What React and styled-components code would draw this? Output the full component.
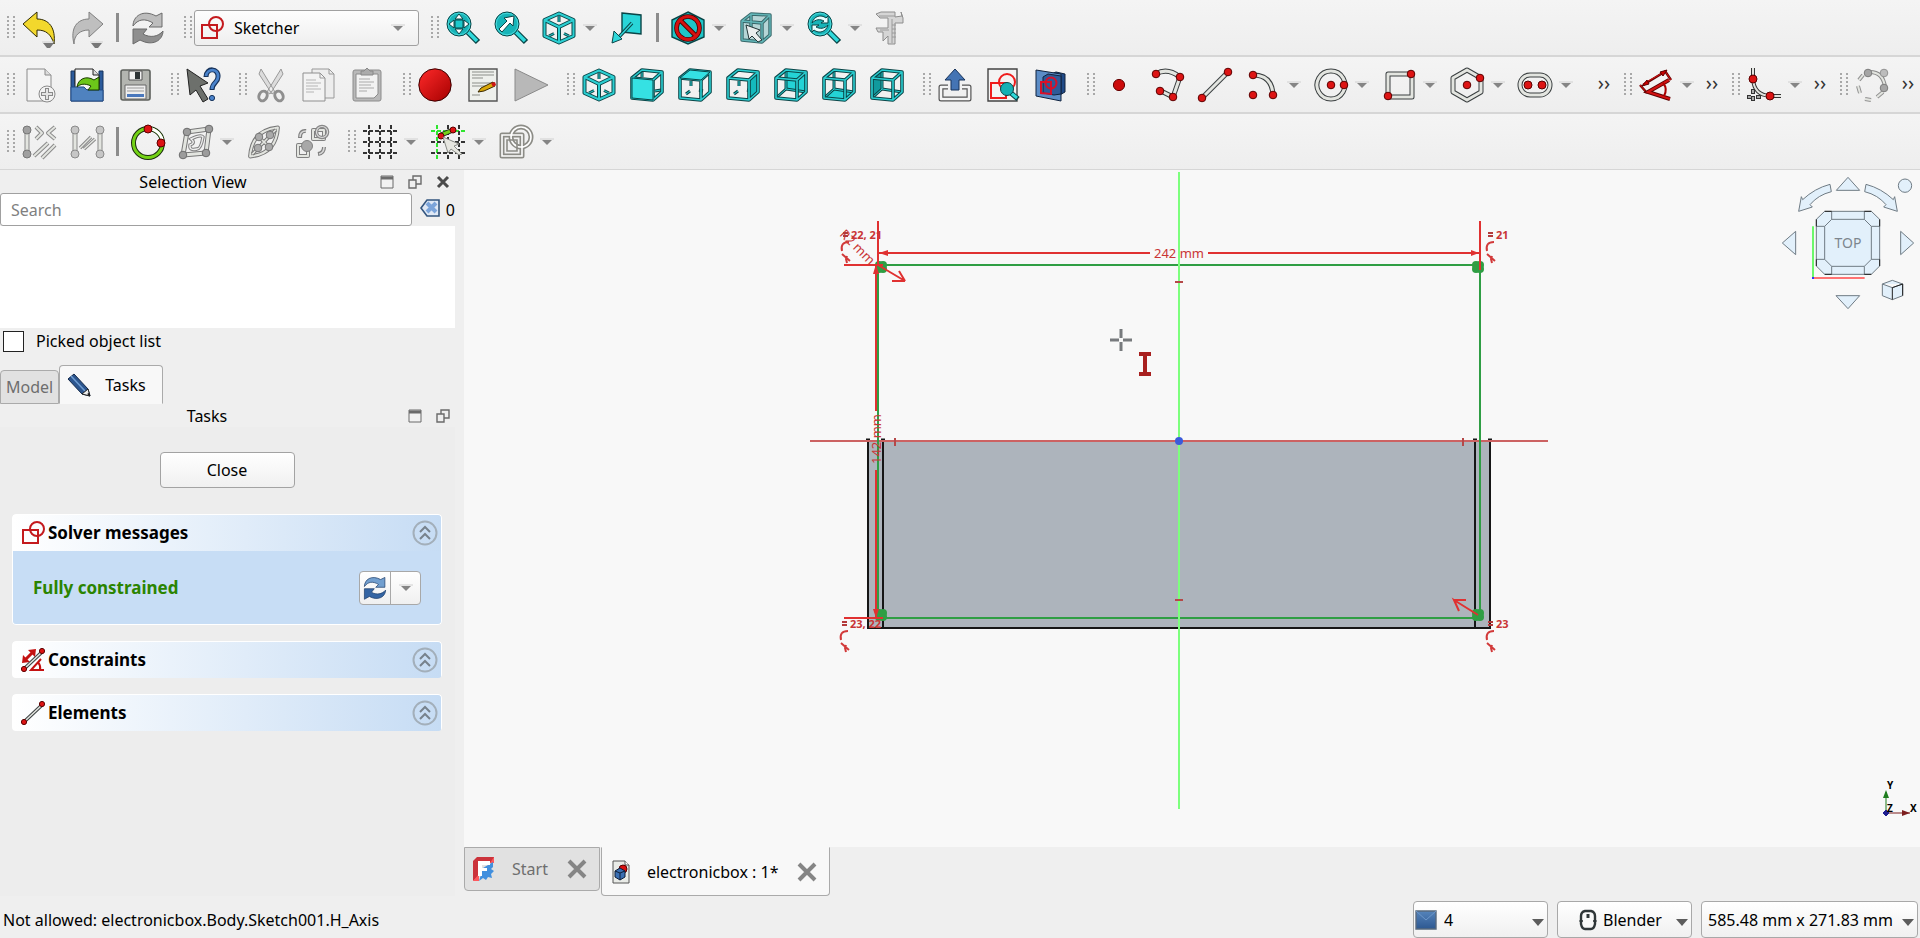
import styled, { createGlobalStyle } from 'styled-components'
import { useState } from 'react'

const TEAL = '#2fd9db'
const TEAL_DARK = '#0a4547'
const GREY = '#8a8a8a'

export default function App() {
  const [picked, setPicked] = useState(false)
  const [search, setSearch] = useState('')

  return (
    <>
      <GlobalStyle />
      <Window>
        <Toolbars />
        <Main>
          <Sidebar>
            <DockTitle>
              <h2>Selection View</h2>
              <TitleButton aria-label="Minimize"><DockMin /></TitleButton>
              <TitleButton aria-label="Float"><DockFloat /></TitleButton>
              <TitleButton aria-label="Close dock"><DockClose /></TitleButton>
            </DockTitle>
            <SearchRow>
              <SearchInput aria-label="Search" placeholder="Search" value={search} onChange={(e) => setSearch(e.target.value)} />
              <ClearButton aria-label="Clear selection"><ClearIcon /></ClearButton>
              <span>0</span>
            </SearchRow>
            <SelectionList />
            <PickedLabel>
              <Checkbox type="checkbox" checked={picked} onChange={(e) => setPicked(e.target.checked)} />
              Picked object list
            </PickedLabel>
            <PanelTabs>
              <PanelTab>Model</PanelTab>
              <PanelTab $active><PencilIcon />Tasks</PanelTab>
            </PanelTabs>
            <DockTitle>
              <h2>Tasks</h2>
              <TitleButton aria-label="Minimize"><DockMin /></TitleButton>
              <TitleButton aria-label="Float"><DockFloat /></TitleButton>
            </DockTitle>
            <TaskPanel>
              <CloseButton>Close</CloseButton>
              <TaskBox>
                <TaskHeader><SketchLogo size={24} /><h3>Solver messages</h3><Collapse /></TaskHeader>
                <TaskBody>
                  <strong>Fully constrained</strong>
                  <SplitButton>
                    <button aria-label="Update"><Recompute size={24} light="#729fcf" dark="#3465a4" line="#1c3c68" /></button>
                    <button aria-label="Update options"><Arrow /></button>
                  </SplitButton>
                </TaskBody>
              </TaskBox>
              <TaskBox>
                <TaskHeader><ConstraintsIcon /><h3>Constraints</h3><Collapse /></TaskHeader>
              </TaskBox>
              <TaskBox>
                <TaskHeader><ElementsIcon /><h3>Elements</h3><Collapse /></TaskHeader>
              </TaskBox>
            </TaskPanel>
          </Sidebar>
          <Document>
            <Viewport>
              <Sketch />
              <CubeCorner><NaviCube /></CubeCorner>
              <AxisCorner><AxisCross /></AxisCorner>
            </Viewport>
            <DocTabs>
              <DocTab>
                <FreecadIcon />
                <span>Start</span>
                <TabClose aria-label="Close Start"><CrossIcon /></TabClose>
              </DocTab>
              <DocTab $active>
                <DocIcon />
                <span>electronicbox : 1*</span>
                <TabClose aria-label="Close electronicbox"><CrossIcon /></TabClose>
              </DocTab>
            </DocTabs>
          </Document>
        </Main>
        <StatusBar>
          <p>Not allowed: electronicbox.Body.Sketch001.H_Axis</p>
          <StatusCombo $width={135} $pad={30}>
            <ComboIcon $left={2}><ReportIcon /></ComboIcon>
            <select aria-label="Notifications"><option>4</option></select>
            <Caret />
          </StatusCombo>
          <StatusCombo $width={135} $pad={45}>
            <ComboIcon $left={22}><MouseIcon /></ComboIcon>
            <select aria-label="Navigation style"><option>Blender</option></select>
            <Caret />
          </StatusCombo>
          <StatusCombo $width={217} $pad={6}>
            <select aria-label="Dimensions"><option>585.48 mm x 271.83 mm</option></select>
            <Caret />
          </StatusCombo>
        </StatusBar>
      </Window>
    </>
  )
}

function Toolbars() {
  return (
    <header>
      <ToolRow>
        <Group>
          <Handle />
          <Tool name="Undo"><Undo /></Tool>
          <Tool name="Redo"><Redo /></Tool>
          <Separator />
          <Tool name="Refresh"><Recompute size={34} light="#bdbdbd" dark="#8f8f8f" line="#6a6a6a" /></Tool>
        </Group>
        <Group>
          <Handle />
          <Workbench>
            <ComboIcon $left={6}><SketchLogo size={24} /></ComboIcon>
            <select aria-label="Workbench"><option>Sketcher</option></select>
            <ComboArrow><Arrow /></ComboArrow>
          </Workbench>
        </Group>
        <Group>
          <Handle />
          <Tool name="Fit all"><Zoom kind="all" /></Tool>
          <Tool name="Fit selection"><Zoom kind="selection" /></Tool>
          <Tool name="Isometric" menu><CubeIso /></Tool>
          <Tool name="Align to selection"><AlignView /></Tool>
          <Separator />
          <Tool name="Draw style" menu><DrawStyle /></Tool>
          <Tool name="Box selection" menu><BoxSelect /></Tool>
          <Tool name="Sync view" menu><Zoom kind="sync" /></Tool>
          <Tool name="Measure"><Caliper /></Tool>
        </Group>
      </ToolRow>
      <ToolRow>
        <Group>
          <Handle />
          <Tool name="New"><NewFile /></Tool>
          <Tool name="Open"><OpenFile /></Tool>
          <Tool name="Save"><SaveFile /></Tool>
        </Group>
        <Group>
          <Handle />
          <Tool name="What's this"><WhatsThis /></Tool>
        </Group>
        <Group>
          <Handle />
          <Tool name="Cut"><Cut /></Tool>
          <Tool name="Copy"><Copy /></Tool>
          <Tool name="Paste"><Paste /></Tool>
        </Group>
        <Group>
          <Handle />
          <Tool name="Record macro"><Record /></Tool>
          <Tool name="Macros"><Macros /></Tool>
          <Tool name="Run macro"><Play /></Tool>
        </Group>
        <Group>
          <Handle />
          <Tool name="Isometric view"><CubeIso /></Tool>
          {['front', 'top', 'right', 'rear', 'bottom', 'left'].map((face) => (
            <Tool key={face} name={face}><CubeView face={face} /></Tool>
          ))}
        </Group>
        <Group>
          <Handle />
          <Tool name="Leave sketch"><LeaveSketch /></Tool>
          <Tool name="View sketch"><ViewSketch /></Tool>
          <Tool name="View section"><ViewSection /></Tool>
        </Group>
        <Group $grow>
          <Handle />
          <Tool name="Point"><Svg><circle cx="17" cy="17" r="5.6" fill="#cc0c0c" stroke="#600" /></Svg></Tool>
          <Tool name="Polyline">
            <Svg>
              <Tube d="M6 6Q17-1 30 9L23 29L9 22" />
              <Dot x={6} y={6} /><Dot x={30} y={9} /><Dot x={23} y={29} /><Dot x={10} y={23} />
            </Svg>
          </Tool>
          <Tool name="Line"><Svg><Tube d="M4 30L30 4" /><Dot x={4} y={30} /><Dot x={30} y={4} /></Svg></Tool>
          <Tool name="Arc" menu>
            <Svg><Tube d="M7 7Q26 7 27 27" /><Dot x={7} y={7} /><Dot x={27} y={27} /><Dot x={7} y={27} /></Svg>
          </Tool>
          <Tool name="Circle" menu>
            <Svg><Tube d="M17 3A14 14 0 1 1 16.9 3Z" /><Dot x={17} y={17} /><Dot x={30} y={17} /></Svg>
          </Tool>
          <Tool name="Rectangle" menu>
            <Svg><Tube d="M6 6H30V29H6Z" /><Dot x={29} y={6} /><Dot x={6} y={28} /></Svg>
          </Tool>
          <Tool name="Polygon" menu>
            <Svg><Tube d="M17 2L31 10V24L17 32L3 24V10Z" /><Dot x={17} y={17} /><Dot x={30} y={10} /></Svg>
          </Tool>
          <Tool name="Slot" menu>
            <Svg><Tube d="M12 7H22A10 10 0 0 1 22 27H12A10 10 0 0 1 12 7Z" /><Dot x={10} y={17} r={4} /><Dot x={24} y={17} r={4} /></Svg>
          </Tool>
          <Extender aria-label="More geometries">››</Extender>
        </Group>
        <Group>
          <Handle />
          <Tool name="Dimension" menu><Dimension /></Tool>
          <Extender aria-label="More constraints">››</Extender>
        </Group>
        <Group>
          <Handle />
          <Tool name="Fillet" menu><Fillet /></Tool>
          <Extender aria-label="More tools">››</Extender>
        </Group>
        <Group>
          <Handle />
          <Tool name="B-spline"><Bspline /></Tool>
          <Extender aria-label="More b-spline tools">››</Extender>
        </Group>
      </ToolRow>
      <ToolRow>
        <Group>
          <Handle />
          <Tool name="Select constraints"><SelectConstraints /></Tool>
          <Tool name="Select elements"><SelectElements /></Tool>
          <Separator />
          <Tool name="Internal geometry">
            <Svg>
              <circle cx="17" cy="18" r="14.5" fill="none" stroke="#1b2b10" strokeWidth="5" />
              <circle cx="17" cy="18" r="14.5" fill="none" stroke="#73d216" strokeWidth="3" />
              <path d="M17 3.500A14.500 14.500 0 0 1 31.500 18" fill="none" stroke="#fff" strokeWidth="3" />
              <Dot x={17} y={4} r={4} /><Dot x={30} y={18} r={4} />
            </Svg>
          </Tool>
          <Tool name="Symmetry" menu><Symmetry /></Tool>
          <Tool name="Ellipse geometry"><EllipseGeo /></Tool>
          <Tool name="Virtual space"><VirtualSpace /></Tool>
        </Group>
        <Group>
          <Handle />
          <Tool name="Grid" menu><Svg><GridLines /></Svg></Tool>
          <Tool name="Snap" menu>
            <Svg>
              <GridLines snap />
              <path d="M10 10L22 5" stroke="#222" strokeWidth="5" />
              <path d="M10 10L22 5" stroke="#73d216" strokeWidth="3" />
              <Dot x={10} y={11} r={3} /><Dot x={22} y={5} r={3} />
              <path d="M12 12L28 19L23 21L31 29L28 30L20 24L17 28Z" fill="#e6e6e0" stroke="#888a85" />
            </Svg>
          </Tool>
          <Tool name="Rendering order" menu>
            <Svg>
              <path d="M3 10H23V31H3Z" fill="none" stroke="#8c8c86" strokeWidth="5" strokeLinejoin="round" />
              <circle cx="22" cy="12" r="10" fill="none" stroke="#8c8c86" strokeWidth="5" />
              <path d="M3 10H23V31H3Z" fill="none" stroke="#fff" strokeWidth="1.600" />
              <circle cx="22" cy="12" r="10" fill="none" stroke="#fff" strokeWidth="1.600" />
              <path d="M8 15H18V26H8Z" fill="none" stroke="#8c8c86" strokeWidth="1.600" />
            </Svg>
          </Tool>
        </Group>
      </ToolRow>
    </header>
  )
}

function Tool({ name, menu, children }) {
  return (
    <>
      <ToolButton aria-label={name}>{children}</ToolButton>
      {menu && <MenuButton aria-label={name + ' menu'}><Arrow /></MenuButton>}
    </>
  )
}

function Svg({ size = 34, children }) {
  return <svg width={size} height={size} viewBox="0 0 34 34">{children}</svg>
}

// A hollow line, the way sketch geometry is drawn on the buttons
function Tube({ d, line = '#3a3f40', fill = '#e3e5e0', w = 5 }) {
  return (
    <>
      <path d={d} fill="none" stroke={line} strokeWidth={w} strokeLinejoin="round" />
      <path d={d} fill="none" stroke={fill} strokeWidth={w - 2} strokeLinejoin="round" />
    </>
  )
}

function Dot({ x, y, r = 3.8, fill = '#dd1414', line = '#5c0000' }) {
  return <circle cx={x} cy={y} r={r} fill={fill} stroke={line} />
}

function Arrow() {
  return (
    <svg width="14" height="8" viewBox="0 0 14 8">
      <path d="M0 1H14" stroke="#d0d0d0" />
      <path d="M2 2H12L7 7Z" fill="#858585" />
    </svg>
  )
}

function Undo() {
  return (
    <Svg>
      <path d="M1 13L15 1V8C27 8 34 17 32 33C29 23 24 19 15 19V26Z" fill="#f3d82c" stroke="#302b00" strokeLinejoin="round" />
      <path d="M20 31H32" stroke="#d0d0d0" />
      <path d="M21 32H32L28 37H25Z" fill="#777" />
    </Svg>
  )
}

function Redo() {
  return (
    <Svg>
      <path d="M33 13L19 1V8C7 8 0 17 4 33C4 24 10 19 19 19V26Z" fill="#bfbfbf" stroke="#808080" strokeLinejoin="round" />
      <path d="M20 31H33" stroke="#d0d0d0" />
      <path d="M21 32H32L28 37H25Z" fill="#777" />
    </Svg>
  )
}

function Recompute({ size, light, dark, line }) {
  return (
    <Svg size={size}>
      <path d="M2 15C2 5 12-2 25 5L31 2V16H18L22 12C14 7 7 8 2 15Z" fill={light} stroke={line} strokeLinejoin="round" />
      <path d="M32 20C32 29 22 36 9 29L2 33V18H16L12 23C19 27 27 26 32 20Z" fill={dark} stroke={line} strokeLinejoin="round" />
    </Svg>
  )
}

function SketchLogo({ size }) {
  return (
    <svg width={size} height={size} viewBox="0 0 24 24" fill="none" stroke="#c41a1e" strokeWidth="2">
      <rect x="2" y="9" width="15" height="13" />
      <circle cx="16" cy="8" r="7" />
    </svg>
  )
}

function Zoom({ kind }) {
  return (
    <Svg>
      <path d="M22 21L32 31" stroke={TEAL_DARK} strokeWidth="6" />
      <path d="M22 21L31 30" stroke={TEAL} strokeWidth="3.600" />
      <circle cx="13" cy="13" r="12" fill="#17b4b8" stroke={TEAL_DARK} />
      <circle cx="13" cy="13" r="10.800" fill="none" stroke="#49d8da" />
      {kind === 'all' && (
        <path d="M13 3L17 8H9ZM13 23L17 18H9ZM3 13L8 9V17ZM23 13L18 9V17Z" fill="#fff" stroke={TEAL_DARK} />
      )}
      {kind === 'all' && <path d="M9 9H17V17H9Z" fill="#1cc9cc" stroke={TEAL_DARK} />}
      {kind === 'selection' && (
        <path d="M5 18L13 10L10 7L20 5L19 15L16 12L8 21Z" fill="#fff" stroke={TEAL_DARK} />
      )}
      {kind === 'sync' && (
        <path d="M5 12C7 5 14 3 19 7L21 5V12H14L17 10C13 8 9 8 5 12ZM21 14C19 21 12 23 7 19L5 21V14H12L9 16C13 18 17 18 21 14Z" fill="#e8ffff" stroke={TEAL_DARK} />
      )}
    </Svg>
  )
}

function CubeIso() {
  return (
    <Svg>
      <Tube d="M17 2.500L31.500 9V25L17 31.500L2.500 25V9ZM2.500 9L17 16L31.500 9M17 16V31.500" line={TEAL_DARK} fill="#2bcfd2" w={4} />
      <Tube d="M17 5V11M7 25L12 22.500M27 25L22 22.500" line={TEAL_DARK} fill="#2bcfd2" w={3} />
    </Svg>
  )
}

const FACES = {
  front: '2,10 23,12 23,32 2,30',
  top: '2,10 12,2 32,4 23,12',
  right: '23,12 32,4 32,24 23,32',
  rear: '12,2 32,4 32,24 12,21',
  bottom: '2,30 12,21 32,24 23,32',
  left: '2,10 12,2 12,21 2,30',
}

function CubeView({ face }) {
  const open = face === 'rear' || face === 'bottom' || face === 'left'
  return (
    <Svg>
      {open && <polygon points={FACES[face]} fill={face === 'left' ? '#119a9e' : '#24d3d6'} />}
      {open && <Tube d="M12 2V21L2 30M12 21L32 24" line={TEAL_DARK} fill="#2bcfd2" w={3} />}
      {!open && face !== 'front' && <Tube d="M13 13V18M8 26L12 23M21 22L25 23" line={TEAL_DARK} fill="#2bcfd2" w={3} />}
      {face === 'front' && <Tube d="M12 3V9M25 23L31 22" line={TEAL_DARK} fill="#2bcfd2" w={3} />}
      {!open && <polygon points={FACES[face]} fill={face === 'right' ? '#14babd' : '#35e1e3'} />}
      <Tube d="M2 10L12 2L32 4V24L23 32L2 30ZM2 10L23 12L32 4M23 12V32" line={TEAL_DARK} fill="#2bcfd2" w={3.600} />
      {(face === 'front' || face === 'top') && <polygon points={FACES[face]} fill="#35e1e3" stroke={TEAL_DARK} />}
    </Svg>
  )
}

function AlignView() {
  return (
    <Svg>
      <path d="M12 2L31 4V23L12 21Z" fill="#29d5d8" stroke={TEAL_DARK} strokeWidth="1.400" />
      <Tube d="M22 12L9 26" line={TEAL_DARK} fill={TEAL} w={3.400} />
      <path d="M2 32L4 20L12 28Z" fill={TEAL} stroke={TEAL_DARK} />
    </Svg>
  )
}

function DrawStyle() {
  return (
    <Svg>
      <path d="M17 1L33 9V26L17 33L1 26V9Z" fill="#1fc5c8" stroke={TEAL_DARK} strokeWidth="1.400" />
      <circle cx="17" cy="17" r="11.500" fill="none" stroke="#400" strokeWidth="4.600" />
      <path d="M9 9L25 25" stroke="#400" strokeWidth="4.600" />
      <circle cx="17" cy="17" r="11.500" fill="none" stroke="#d41111" strokeWidth="3" />
      <path d="M9 9L25 25" stroke="#d41111" strokeWidth="3" />
    </Svg>
  )
}

function BoxSelect() {
  return (
    <Svg>
      <path d="M3 10L12 3L31 4V24L23 31L3 29Z" fill="#b5d5d6" />
      <Tube d="M3 10L12 3L31 4V24L23 31L3 29ZM3 10L23 12L31 4M23 12V31M12 3V20" line="#38686a" fill="#62b6b8" w={3.400} />
      <path d="M7 14L21 19L17 22L23 29L19 31L13 25L10 28Z" fill="#e9eeee" stroke="#223536" />
    </Svg>
  )
}

function Caliper() {
  return (
    <Svg>
      <path d="M1 3L6 1H20V6L27 5L26 1L28 7V12H20V33H13V25L8 30V21H3L1 17H13V7H5Z" fill="#d5d5d5" stroke="#8d8d8d" strokeLinejoin="round" />
      <path d="M17 8V32M17 14H21M17 18H21M17 22H21M17 26H21M4 5H20M5 19H14" stroke="#9a9a9a" />
    </Svg>
  )
}

function NewFile() {
  return (
    <Svg>
      <path d="M5 1H23L29 7V33H5Z" fill="#f4f4f4" stroke={GREY} />
      <path d="M23 1V7H29" fill="#ddd" stroke={GREY} />
      <circle cx="25" cy="26" r="8" fill="#f2f2f2" stroke={GREY} />
      <path d="M25 20V32M19 26H31" stroke={GREY} strokeWidth="4" />
      <path d="M25 21V31M20 26H30" stroke="#e3e3e3" strokeWidth="2" />
    </Svg>
  )
}

function OpenFile() {
  return (
    <Svg>
      <path d="M1 3H5V16H29V3H33V33H1Z" fill="#2b5a9b" stroke="#16325a" />
      <path d="M5 1H23L29 7V22H5Z" fill="#f6f6f6" stroke="#222" />
      <path d="M23 1V7H29" fill="#ddd" stroke="#222" />
      <path d="M1 19H14L17 22H33V33H1Z" fill="#4f82bf" stroke="#204a87" />
      <path d="M7 19C8 11 16 7 24 12L29 9V22H18L21 18C15 15 10 16 7 19Z" fill="#6cc61a" stroke="#1b3b00" />
    </Svg>
  )
}

function SaveFile() {
  return (
    <Svg>
      <rect x="3" y="2" width="29" height="30" rx="2" fill="#b3b5b0" stroke="#5d605c" strokeWidth="1.600" />
      <path d="M11 3H24V12H11Z" fill="#f2f2f2" stroke="#555" />
      <path d="M17 4H22V11H17Z" fill="#2e3436" />
      <path d="M7 17H28V31H7Z" fill="#eee" stroke="#666" />
      <path d="M9 20H26M9 23H26" stroke="#999" />
      <path d="M9 26H26V29H9Z" fill="#4a78bd" />
    </Svg>
  )
}

function WhatsThis() {
  return (
    <Svg>
      <path d="M1 1L22 15L14 18L22 31L17 34L10 22L4 27Z" fill="#6d706c" stroke="#222" strokeLinejoin="round" />
      <path d="M20 9C20 -1 33 0 32 9C32 15 26 14 26 22" fill="none" stroke="#16325a" strokeWidth="5" />
      <path d="M20 8C21 0 33 0 32 9C32 15 26 14 26 21" fill="none" stroke="#4a83cb" strokeWidth="2.800" />
      <circle cx="26" cy="30" r="2.600" fill="#4a83cb" stroke="#16325a" />
    </Svg>
  )
}

function Cut() {
  return (
    <Svg>
      <path d="M7 1L21 24L18 26L5 6ZM27 1L13 24L16 26L29 6Z" fill="#dcdcdc" stroke="#999" />
      <ellipse cx="9" cy="28" rx="4" ry="5" fill="none" stroke="#8f8f8f" strokeWidth="3" transform="rotate(25 9 28)" />
      <ellipse cx="25" cy="28" rx="4" ry="5" fill="none" stroke="#8f8f8f" strokeWidth="3" transform="rotate(-25 25 28)" />
    </Svg>
  )
}

function Copy() {
  return (
    <Svg>
      <path d="M10 1H27L32 6V30H10Z" fill="#ededed" stroke="#999" />
      <path d="M27 1V6H32" fill="none" stroke="#999" />
      <path d="M1 5H18L23 10V33H1Z" fill="#f3f3f3" stroke="#8f8f8f" />
      <path d="M18 5V10H23" fill="none" stroke="#999" />
      <path d="M4 12H14M4 15H19M4 18H16M4 21H19M4 24H12" stroke="#b5b5b5" />
    </Svg>
  )
}

function Paste() {
  return (
    <Svg>
      <rect x="3" y="2" width="28" height="31" rx="2" fill="#b9b9b9" stroke="#8c8c8c" />
      <path d="M6 6H28V26L24 30H6Z" fill="#f2f2f2" stroke="#8c8c8c" />
      <path d="M11 7V3H14L17 0L20 3H23V7Z" fill="#ababab" stroke="#888" />
      <path d="M9 11H20M9 14H24M9 17H21M9 20H24M9 23H17" stroke="#aaa" />
    </Svg>
  )
}

function Record() {
  return (
    <Svg>
      <defs>
        <linearGradient id="record" x2="1" y2="1"><stop stopColor="#ff2a2a" /><stop offset="1" stopColor="#a50000" /></linearGradient>
      </defs>
      <circle cx="17" cy="17" r="16.200" fill="url(#record)" stroke="#3a0000" />
    </Svg>
  )
}

function Macros() {
  return (
    <Svg>
      <path d="M3 1H31V33H3Z" fill="#eef0ec" stroke="#555" strokeWidth="1.400" />
      <path d="M6 4H28M6 7H28M6 10H17M6 15H28M6 18H28M6 27H14" stroke="#8b8e89" />
      <path d="M12 24L15 20L27 14L29 18L18 23Z" fill="#d9a708" stroke="#3b2a00" />
      <path d="M25 15L29 14L30 17L27 19Z" fill="#cc1414" />
    </Svg>
  )
}

function Play() {
  return <Svg><path d="M1 1L34 17L1 33Z" fill="#b8b8b8" stroke="#8a8a8a" /></Svg>
}

function LeaveSketch() {
  return (
    <Svg>
      <path d="M10 19H3V31H31V19H24" fill="none" stroke="#555" strokeWidth="5" strokeLinejoin="round" />
      <path d="M10 19H3V31H31V19H24" fill="none" stroke="#f4f4f4" strokeWidth="2.600" strokeLinejoin="round" />
      <path d="M17 1L27 12H21V22H13V12H7Z" fill="#4474b4" stroke="#16325a" />
    </Svg>
  )
}

function ViewSketch() {
  return (
    <Svg>
      <path d="M2 1H31V33H2Z" fill="#f3f3f3" stroke="#444" strokeWidth="1.400" />
      <path d="M5 15H20V30H5Z" fill="none" stroke="#ef1c1c" strokeWidth="2" />
      <circle cx="21" cy="14" r="8" fill="none" stroke="#ef1c1c" strokeWidth="2" />
      <path d="M25 25L32 31" stroke={TEAL_DARK} strokeWidth="5" />
      <path d="M25 25L31 30" stroke={TEAL} strokeWidth="3" />
      <circle cx="21" cy="21" r="6.500" fill="#15b0b4" stroke={TEAL_DARK} />
    </Svg>
  )
}

function ViewSection() {
  return (
    <Svg>
      <path d="M12 8L22 4L31 6V24L24 28L12 26Z" fill="#204a87" stroke="#10233f" />
      <path d="M2 2L27 6V33L2 28Z" fill="#5b8cc6" stroke="#10233f" />
      <path d="M9 9L14 6L27 8V26L20 27L9 25Z" fill="#2f5a98" stroke="#10233f" />
      <path d="M7 14H17V26L7 25Z" fill="none" stroke="#d8102a" strokeWidth="2" />
      <circle cx="17" cy="15" r="5.500" fill="none" stroke="#d8102a" strokeWidth="2" />
    </Svg>
  )
}

function Dimension() {
  return (
    <Svg>
      <path d="M4 17L27 3M1 17L8 25M26 3L32 12" stroke="#6b0000" strokeWidth="2.400" />
      <path d="M4 16L27 3M1 17L8 25M26 3L32 12" stroke="#d31111" />
      <path d="M3 18L8 12L10 16ZM28 2L21 4L24 8Z" fill="#c00" stroke="#5b0000" />
      <path d="M31 31L9 24L30 12" fill="none" stroke="#5b0000" strokeWidth="4" />
      <path d="M31 31L9 24L30 12" fill="none" stroke="#d31111" strokeWidth="2.200" />
      <path d="M24 15Q29 21 25 28" fill="none" stroke="#a00" strokeWidth="2" />
    </Svg>
  )
}

function Fillet() {
  return (
    <Svg>
      <Tube d="M6 0V11Q7 27 23 28H34" line="#333" w={4} />
      <path d="M6 21V26M0 29H4M9 29H14M6 28V33" stroke="#333" strokeWidth="4" />
      <path d="M6 22V25M1 29H4M10 29H13M6 29V32" stroke="#ccc" strokeWidth="1.600" />
      <Dot x={6} y={11} r={4} /><Dot x={23} y={28} r={4} />
    </Svg>
  )
}

function Bspline() {
  return (
    <Svg>
      <Tube d="M13 4Q28 3 30 19" line="#8a8a8a" w={4} />
      <Tube d="M8 7L4 12M3 18L5 25M10 31L16 32M22 29L28 24" line="#929292" w={4} />
      <Dot x={13} y={5} fill="#a5a5a5" line="#7c7c7c" />
      <Dot x={29} y={5} fill="#bcbcbc" line="#929292" />
      <Dot x={29} y={20} fill="#a5a5a5" line="#7c7c7c" />
    </Svg>
  )
}

function SelectConstraints() {
  return (
    <Svg>
      <Tube d="M5 5V29" line="#888" w={5} />
      <Dot x={5} y={5} r={4} fill="#a0a0a0" line="#777" /><Dot x={5} y={29} r={4} fill="#a0a0a0" line="#777" />
      <Tube d="M14 2L20 8L14 14M33 2L26 8L33 14M12 31L26 18M20 33L33 20" line="#8a8a8a" w={4} />
    </Svg>
  )
}

function SelectElements() {
  const dots = [[5, 5], [5, 29], [30, 5], [30, 29]]
  return (
    <Svg>
      <Tube d="M5 5V29M30 5V29" line="#8a8a8a" w={5} />
      {dots.map(([x, y]) => <Dot key={x + '-' + y} x={x} y={y} r={4} fill="#c6c6c6" line="#8a8a8a" />)}
      <Tube d="M10 23L21 12M14 24L25 14" line="#8a8a8a" w={3.400} />
    </Svg>
  )
}

function Symmetry() {
  const dots = [[8, 7], [30, 4], [4, 30], [27, 28]]
  return (
    <Svg>
      <Tube d="M8 7L30 4L27 28L4 30Z" line="#777" w={5} />
      <path d="M12 14Q22 9 24 12Q22 24 18 24Q10 26 11 20Q17 18 12 14Z" fill="none" stroke="#808080" strokeWidth="3.400" />
      <path d="M12 14Q22 9 24 12Q22 24 18 24Q10 26 11 20Q17 18 12 14Z" fill="none" stroke="#eee" strokeWidth="1.400" />
      {dots.map(([x, y]) => <Dot key={x} x={x} y={y} r={3.800} fill="#9c9c9c" line="#6d6d6d" />)}
    </Svg>
  )
}

function EllipseGeo() {
  return (
    <Svg>
      <g transform="rotate(-46 17 17)">
        <Tube d="M-3 17Q17 0 37 17Q17 34 -3 17Z" line="#777" w={4} />
        <Tube d="M0 17H34M17 9V25" line="#777" w={3.600} />
      </g>
      <Dot x={12} y={12} fill="#aaa" line="#777" /><Dot x={23} y={10} fill="#aaa" line="#777" />
      <Dot x={11} y={23} fill="#aaa" line="#777" /><Dot x={22} y={22} fill="#aaa" line="#777" />
    </Svg>
  )
}

function VirtualSpace() {
  return (
    <Svg>
      <Tube d="M18 14H29V5H18Z" line="#808080" w={4} />
      <circle cx="27" cy="7" r="5.500" fill="none" stroke="#888" strokeWidth="3.600" />
      <circle cx="27" cy="7" r="5.500" fill="none" stroke="#ddd" strokeWidth="1.200" />
      <Tube d="M3 20H13V31H3Z" line="#808080" w={4} />
      <circle cx="12" cy="21" r="5.500" fill="#a8a8a8" stroke="#808080" />
      <path d="M5 13Q5 5 11 6M29 22Q29 28 23 29" fill="none" stroke="#808080" strokeWidth="4" />
      <path d="M5 12Q5 6 11 6M29 22Q29 28 24 29" fill="none" stroke="#d8d8d8" strokeWidth="1.600" />
    </Svg>
  )
}

function GridLines({ snap }) {
  const first = snap ? '#2fe52f' : '#333'
  return (
    <g strokeWidth="2" strokeDasharray="4 2">
      <path d="M6 0V34M0 6H34" stroke={first} />
      <path d="M17 0V34M28 0V34M0 17H34M0 28H34" stroke="#333" />
    </g>
  )
}

function DockMin() {
  return (
    <svg width="14" height="14" viewBox="0 0 14 14">
      <path d="M1 1H13V13H1Z" fill="#f2f2f2" stroke="#6b6b6b" /><path d="M1 3H13" stroke="#6b6b6b" strokeWidth="3" />
    </svg>
  )
}

function DockFloat() {
  return (
    <svg width="14" height="14" viewBox="0 0 14 14" fill="#efefef" stroke="#6b6b6b" strokeWidth="1.400">
      <path d="M5 1H13V9H5Z" /><path d="M1 5H8V13H1Z" />
    </svg>
  )
}

function DockClose() {
  return (
    <svg width="14" height="14" viewBox="0 0 14 14"><path d="M2 2L12 12M12 2L2 12" stroke="#4a4a4a" strokeWidth="3" /></svg>
  )
}

function CrossIcon() {
  return (
    <svg width="20" height="20" viewBox="0 0 20 20"><path d="M2 2L18 18M18 2L2 18" stroke="#858585" strokeWidth="4" /></svg>
  )
}

function ClearIcon() {
  return (
    <svg width="20" height="18" viewBox="0 0 20 18">
      <path d="M7 1H19V17H7L1 9Z" fill="#dfe8f5" stroke="#33557f" strokeWidth="1.600" />
      <path d="M7 4L16 13M16 4L7 13" stroke="#7ba4da" strokeWidth="4" />
    </svg>
  )
}

function PencilIcon() {
  return (
    <svg width="24" height="24" viewBox="0 0 24 24">
      <path d="M1 6L7 1L21 16L23 23L15 21Z" fill="#2c558e" stroke="#13294a" />
      <path d="M4 3L18 18" stroke="#6d9bd0" strokeWidth="1.600" />
      <path d="M15 21L21 16L23 23Z" fill="#eee" stroke="#222" />
      <path d="M20 21L23 23L22 20Z" fill="#111" />
    </svg>
  )
}

function Collapse() {
  return (
    <button aria-label="Collapse">
      <svg width="26" height="26" viewBox="0 0 26 26" fill="none">
        <circle cx="13" cy="13" r="11.500" stroke="#a3afba" strokeWidth="2" />
        <path d="M8 12L13 7L18 12M8 19L13 14L18 19" stroke="#77828c" strokeWidth="2" />
      </svg>
    </button>
  )
}

function ElementsIcon() {
  return (
    <svg width="24" height="24" viewBox="0 0 24 24">
      <Tube d="M4 20L21 4" w={3.600} /><Dot x={3} y={21} r={2.600} /><Dot x={21} y={3} r={2.600} />
    </svg>
  )
}

function ConstraintsIcon() {
  return (
    <svg width="24" height="24" viewBox="0 0 24 24">
      <path d="M3 13L13 3" stroke="#c41212" strokeWidth="3" />
      <path d="M1 15L2 7L9 14ZM15 1L7 2L14 9Z" fill="#c41212" />
      <Tube d="M4 20L21 4" w={3.600} /><Dot x={3} y={21} r={2.600} /><Dot x={21} y={3} r={2.600} />
      <path d="M23 22H10L20 11M17 14Q20 18 19 22" fill="none" stroke="#c41212" strokeWidth="2" />
    </svg>
  )
}

function FreecadIcon() {
  return (
    <svg width="22" height="24" viewBox="0 0 22 24">
      <path d="M4 0H21V6H6V19L0 24V4Z" fill="#cb333b" />
      <path d="M21 0V6H17ZM0 24L6 17V24Z" fill="#ff585d" />
      <path d="M6 24L10 11L20 5V10L18 12L21 14L18 17L19 21L15 20L13 23L10 21Z" fill="#418fde" />
      <rect x="5" y="4" width="12" height="4" fill="#fff" />
      <rect x="5" y="4" width="4" height="15" fill="#fff" />
      <rect x="9" y="11" width="5" height="3" fill="#fff" />
    </svg>
  )
}

function DocIcon() {
  return (
    <svg width="18" height="24" viewBox="0 0 18 24">
      <path d="M1 1H13L17 5V23H1Z" fill="#e9ebe7" stroke="#555" />
      <path d="M13 1V5H17" fill="#fff" stroke="#555" />
      <circle cx="11" cy="9" r="4" fill="#d80f0f" stroke="#5b0000" />
      <path d="M3 11L8 8L13 11V17L8 20L3 17Z" fill="#3a6fb3" stroke="#0e1e38" />
      <path d="M3 11L8 13L13 11M8 13V20" fill="none" stroke="#0e1e38" />
    </svg>
  )
}

function ReportIcon() {
  return (
    <svg width="22" height="20" viewBox="0 0 22 20">
      <defs>
        <linearGradient id="report" x2="0" y2="1"><stop stopColor="#5584bb" /><stop offset="1" stopColor="#2d5891" /></linearGradient>
      </defs>
      <path d="M1 1H21V19H1Z" fill="url(#report)" stroke="#57697e" strokeWidth="1.400" />
      <path d="M1 1L11 10L21 1" fill="none" stroke="#6d97c9" />
    </svg>
  )
}

function MouseIcon() {
  return (
    <svg width="18" height="22" viewBox="0 0 18 22" fill="none">
      <path d="M6 2H12Q16 3 16 7V15Q15 20 12 20H6Q3 20 2 15V7Q2 3 6 2Z" fill="#f8f8f8" stroke="#2f3638" strokeWidth="2.400" />
      <path d="M1 11L4 12L1 13ZM17 11L14 12L17 13Z" fill="#2f3638" stroke="#2f3638" />
      <path d="M9 5V9" stroke="#2f3638" strokeWidth="3" />
    </svg>
  )
}

function Caret() {
  return <svg width="12" height="7" viewBox="0 0 12 7"><path d="M0 0H12L6 7Z" fill="#5c5c5c" /></svg>
}

const CORNERS = [[881, 267], [1478, 267], [881, 615], [1478, 615]]

// Equal + tangent marks next to a rounded corner
function CornerMark({ x, y, label }) {
  return (
    <g>
      <path d={`M${x + 1} ${y + 1}h5M${x + 1} ${y + 4}h5`} stroke="#b33a3a" strokeWidth="2" />
      <text x={x + 9} y={y + 7} fontSize="11" fontWeight="bold" fill="#c93535">{label}</text>
      <path d={`M${x + 7} ${y + 10}q-9 0 -7 9`} fill="none" stroke="#d23a3a" strokeWidth="2" />
      <path d={`M${x} ${y + 22}l8 7M${x + 5} ${y + 24}l-1 3l1 4`} fill="none" stroke="#d23a3a" strokeWidth="2" />
    </g>
  )
}

function Sketch() {
  return (
    <svg width="100%" height="100%" viewBox="464 170 1456 677" fontFamily="'Noto Sans', sans-serif">
      <rect x="868" y="441" width="622" height="187" fill="#adb4bc" />
      <path d="M868 439V628H1490V439M883 439V628M1475 439V628" fill="none" stroke="#161616" strokeWidth="2" />
      <path d="M866 440h4M881 440h4M1473 440h4M1488 440h4" stroke="#161616" strokeWidth="3" />
      <path d="M810 441H1548" stroke="#cc6262" strokeWidth="2" />
      <path d="M878 265V618H1480V265Z" fill="none" stroke="#2f9e44" strokeWidth="2" />
      <path d="M1179 172V809" stroke="#7dff7d" strokeWidth="2" />
      <g fill="#2f9e44">
        {CORNERS.map(([x, y]) => (
          <g key={x + '-' + y}>
            <circle cx={x - 2} cy={y - 2} r="4" /><circle cx={x + 2} cy={y - 2} r="4" />
            <circle cx={x - 2} cy={y + 2} r="4" /><circle cx={x + 2} cy={y + 2} r="4" />
          </g>
        ))}
      </g>
      <g stroke="#e03131" strokeWidth="2" fill="none">
        <path d="M878 221V265M1480 221V270M844 265H883M844 618H883" />
        <path d="M878 253H1150M1208 253H1480" />
        <path d="M876 265V411M876 470V618" />
        <path d="M878 265L905 281L899 271M905 281H892" />
        <path d="M1478 615L1454 600L1459 611M1454 600H1466" />
      </g>
      <g fill="#e03131">
        <path d="M879 253L888 250V256ZM1479 253L1471 250V256ZM876 264L873 274H879ZM876 618L873 609H879Z" />
      </g>
      <path d="M895 438V446M1463 438V446M1175 282H1183M1175 600H1183" stroke="#b54848" strokeWidth="2" />
      <circle cx="1179" cy="441" r="4" fill="#3b5bdb" />
      <g fill="#c93535" fontSize="13">
        <text x="1179" y="258" textAnchor="middle">242 mm</text>
        <text transform="translate(881 464) rotate(-90)">142 mm</text>
        <text transform="translate(839 235) rotate(45)">R2 mm</text>
      </g>
      <CornerMark x={842} y={232} label="22, 21" />
      <CornerMark x={1487} y={232} label="21" />
      <CornerMark x={841} y={621} label="23, 22" />
      <CornerMark x={1487} y={621} label="23" />
      <path d="M1110 340H1119M1123 340H1132M1121 329V338M1121 342V351" stroke="#777a7d" strokeWidth="3" />
      <path d="M1139 354H1151M1139 374H1151M1145 354V374" stroke="#a8201f" strokeWidth="4" />
    </svg>
  )
}

function NaviCube() {
  return (
    <svg width="160" height="155" viewBox="0 15 480 465" fill="#e2f0fb" stroke="#6f7b84" strokeWidth="3">
      <path d="M264 37L299 76H229ZM264 431L228 392H299ZM67 234L107 199V269ZM461 234L422 199V269Z" />
      <path d="M210 58Q164 70 128 104L124 95L116 139L157 126L150 119Q174 90 214 80Z" />
      <path d="M318 58Q364 70 400 104L404 95L412 139L371 126L378 119Q354 90 314 80Z" />
      <circle cx="435" cy="62" r="20" />
      <path d="M194 139H334L359 163V303L334 328H194L169 303V163Z" />
      <path d="M215 163H313L334 184V283L313 304H215L194 283V184Z" />
      <path d="M169 184H194M215 139V163M313 139V163M334 184H359M169 283H194M215 304V328M313 304V328M334 283H359" />
      <path d="M194 139H215M169 163V184M313 139H334M359 163V184M169 283V303M194 328H215M313 328H334M359 283V303" stroke="#222" />
      <path d="M159 184V336" stroke="#6cf76c" strokeWidth="6" />
      <path d="M162 339H314" stroke="#ff7373" strokeWidth="6" />
      <path d="M156 336H162V342H156Z" fill="#33f" stroke="none" />
      <text x="264" y="248" textAnchor="middle" fontFamily="'Noto Sans', sans-serif" fontSize="42" fill="#7d868e" stroke="none">TOP</text>
      <path d="M367 357L397 346L428 357V392L397 404L367 392ZM367 357L397 368L428 357" />
      <path d="M397 368V404M397 368L428 357V392" fill="none" stroke="#222" />
    </svg>
  )
}

function AxisCross() {
  return (
    <svg width="40" height="38" viewBox="0 0 40 38" fontFamily="'Noto Sans', sans-serif" fontSize="10" fontWeight="bold">
      <path d="M6 33V12" stroke="#1e7d1e" />
      <path d="M6 10L9 18H3Z" fill="#1e7d1e" />
      <path d="M8 33H30" stroke="#7d1e1e" />
      <path d="M30 33L22 30V36Z" fill="#7d1e1e" />
      <path d="M6 30L9 33L6 36L3 33Z" fill="#1e1e90" stroke="#1e1e90" />
      <text x="7" y="9">Y</text>
      <text x="30" y="32">X</text>
      <text x="7" y="32">Z</text>
    </svg>
  )
}

const GlobalStyle = createGlobalStyle`
  * {
    box-sizing: border-box;
  }
  body {
    margin: 0;
    background: #efefef;
    color: #000;
    font-family: 'Noto Sans', 'Open Sans', sans-serif;
    font-size: 16px;
    line-height: 20px;
  }
  button, input, select {
    font: inherit;
    color: inherit;
    padding: 0;
    border: none;
    background: none;
  }
  h2, h3, p {
    margin: 0;
    font: inherit;
  }
  svg {
    display: block;
    overflow: visible;
    flex-shrink: 0;
  }
`

const Window = styled.div`
  display: flex;
  flex-direction: column;
  min-height: 100vh;
`

const ToolRow = styled.div`
  display: flex;
  align-items: center;
  height: 57px;
  padding-right: 4px;
  border-bottom: 2px solid #d6d6d6;
  background: linear-gradient(#f4f4f4, #eeeeee);
  &:last-child {
    height: 56px;
    border-bottom-width: 1px;
  }
`

const Group = styled.div`
  display: flex;
  align-items: center;
  flex: ${(p) => (p.$grow ? '1 0 auto' : 'none')};
  margin-right: 5px;
  &:last-child {
    margin-right: 0;
  }
`

const Handle = styled.div`
  width: 8px;
  height: 24px;
  margin: 0 0 0 7px;
  background: radial-gradient(circle at 1px 1px, #a8a8a8 1px, transparent 1px) 0 0 / 6px 4px;
`

const ToolButton = styled.button`
  display: flex;
  align-items: center;
  justify-content: center;
  width: 48px;
  height: 48px;
`

const MenuButton = styled.button`
  width: 20px;
  height: 40px;
`

const Separator = styled.div`
  width: 3px;
  height: 29px;
  margin: 0 5px;
  background: #8c8c8c;
`

const Extender = styled.button`
  width: 20px;
  height: 48px;
  margin-left: auto;
  padding: 0 0 4px 4px;
  font-size: 20px;
  color: #333;
`

const Workbench = styled.div`
  position: relative;
  width: 225px;
  margin: 0 0 0 2px;
  select {
    width: 100%;
    height: 36px;
    padding-left: 39px;
    border: 1px solid #a0a0a0;
    border-radius: 3px;
    background: linear-gradient(#fdfdfd, #efefef);
    appearance: none;
  }
`

const ComboIcon = styled.span`
  position: absolute;
  top: 0;
  bottom: 0;
  left: ${(p) => p.$left}px;
  display: flex;
  align-items: center;
  pointer-events: none;
`

const ComboArrow = styled.span`
  position: absolute;
  top: 14px;
  right: 14px;
  pointer-events: none;
`

const Main = styled.main`
  display: flex;
  flex: 1;
`

const Sidebar = styled.aside`
  display: flex;
  flex-direction: column;
  flex: 0 0 464px;
  padding-right: 9px;
`

const DockTitle = styled.div`
  display: flex;
  align-items: center;
  gap: 14px;
  height: 23px;
  padding-right: 5px;
  h2 {
    flex: 1;
    padding-left: 20px;
    text-align: center;
  }
`

const TitleButton = styled.button`
  width: 14px;
  height: 14px;
`

const SearchRow = styled.div`
  display: flex;
  align-items: center;
  height: 33px;
`

const SearchInput = styled.input`
  flex: 1;
  height: 33px;
  padding: 0 10px;
  border: 1px solid #a0a0a0;
  border-radius: 3px;
  background: #fff;
  &::placeholder {
    color: #808080;
    opacity: 1;
  }
`

const ClearButton = styled.button`
  margin: 0 6px 4px 8px;
`

const SelectionList = styled.div`
  height: 102px;
  background: #fff;
`

const PickedLabel = styled.label`
  display: flex;
  align-items: center;
  gap: 12px;
  height: 26px;
  padding-left: 3px;
`

const Checkbox = styled.input`
  width: 21px;
  height: 21px;
  margin: 0;
  border: 1px solid #222;
  background: #fff;
  appearance: none;
  &:checked {
    background: #3465a4;
  }
`

const PanelTabs = styled.div`
  display: flex;
  align-items: flex-end;
  height: 50px;
`

const PanelTab = styled.button`
  display: flex;
  align-items: center;
  gap: 14px;
  height: ${(p) => (p.$active ? 39 : 34)}px;
  padding: ${(p) => (p.$active ? '0 16px 0 7px' : '0 5px')};
  border: 1px solid #aaa;
  border-bottom-color: ${(p) => (p.$active ? '#f8f8f8' : '#aaa')};
  border-radius: 4px 4px 0 0;
  background: ${(p) => (p.$active ? '#f8f8f8' : '#e1e1e1')};
  color: ${(p) => (p.$active ? '#000' : '#6e6e6e')};
`

const TaskPanel = styled.div`
  display: flex;
  flex-direction: column;
  flex: 1;
  gap: 16px;
  padding: 25px 13px 0 12px;
  background: #ededed;
`

const CloseButton = styled.button`
  align-self: center;
  width: 135px;
  height: 36px;
  margin-bottom: 10px;
  border: 1px solid #a3a3a3;
  border-radius: 4px;
  background: linear-gradient(#fff, #f0f0f0);
`

const TaskBox = styled.section`
  border-radius: 4px;
  overflow: hidden;
`

const TaskHeader = styled.div`
  display: flex;
  align-items: center;
  gap: 3px;
  height: 37px;
  padding: 0 3px 0 8px;
  border: 1px solid #fff;
  border-bottom: none;
  border-radius: 4px 4px 0 0;
  background: linear-gradient(90deg, #fff, #c6dcf4);
  h3 {
    flex: 1;
    font-size: 17px;
    font-weight: bold;
  }
`

const TaskBody = styled.div`
  display: flex;
  align-items: center;
  justify-content: space-between;
  height: 74px;
  padding: 0 20px;
  border: 1px solid #fff;
  border-top: none;
  border-radius: 0 0 4px 4px;
  background: #c7ddf5;
  strong {
    font-size: 17px;
    color: #2b8400;
  }
`

const SplitButton = styled.div`
  display: flex;
  height: 34px;
  border: 1px solid #a8a8a8;
  border-radius: 4px;
  background: linear-gradient(#fff, #f0f0f0);
  button {
    display: flex;
    align-items: center;
    justify-content: center;
    width: 30px;
  }
  button + button {
    border-left: 1px solid #a8a8a8;
  }
`

const Document = styled.div`
  display: flex;
  flex-direction: column;
  flex: 1;
  min-width: 0;
`

const Viewport = styled.div`
  position: relative;
  flex: 1 0 0;
  min-height: 400px;
  background: #f8f8f8;
  > svg {
    position: absolute;
    inset: 0;
  }
`

const CubeCorner = styled.div`
  position: absolute;
  top: 0;
  right: 0;
`

const AxisCorner = styled.div`
  position: absolute;
  right: 0;
  bottom: 29px;
`

const DocTabs = styled.div`
  display: flex;
  align-items: flex-start;
  gap: 1px;
  height: 49px;
`

const DocTab = styled.div`
  display: flex;
  align-items: center;
  height: ${(p) => (p.$active ? 49 : 44)}px;
  padding: ${(p) => (p.$active ? '0 12px 0 10px' : '0 12px 0 8px')};
  border: 1px solid #aaa;
  border-top-color: ${(p) => (p.$active ? '#f8f8f8' : '#aaa')};
  border-radius: 0 0 4px 4px;
  background: ${(p) => (p.$active ? '#f8f8f8' : '#e1e1e1')};
  color: ${(p) => (p.$active ? '#000' : '#6e6e6e')};
  span {
    margin: 0 19px 0 17px;
  }
`

const TabClose = styled.button`
  width: 20px;
  height: 20px;
`

const StatusBar = styled.footer`
  display: flex;
  align-items: center;
  gap: 9px;
  height: 42px;
  padding: 5px 2px 0 3px;
  p {
    flex: 1;
  }
`

const StatusCombo = styled.div`
  position: relative;
  width: ${(p) => p.$width}px;
  select {
    width: 100%;
    height: 37px;
    padding-left: ${(p) => p.$pad}px;
    border: 1px solid #a8a8a8;
    border-radius: 4px;
    background: linear-gradient(#fff, #f0f0f0);
    appearance: none;
  }
  > svg {
    position: absolute;
    right: 4px;
    top: 18px;
    pointer-events: none;
  }
`
